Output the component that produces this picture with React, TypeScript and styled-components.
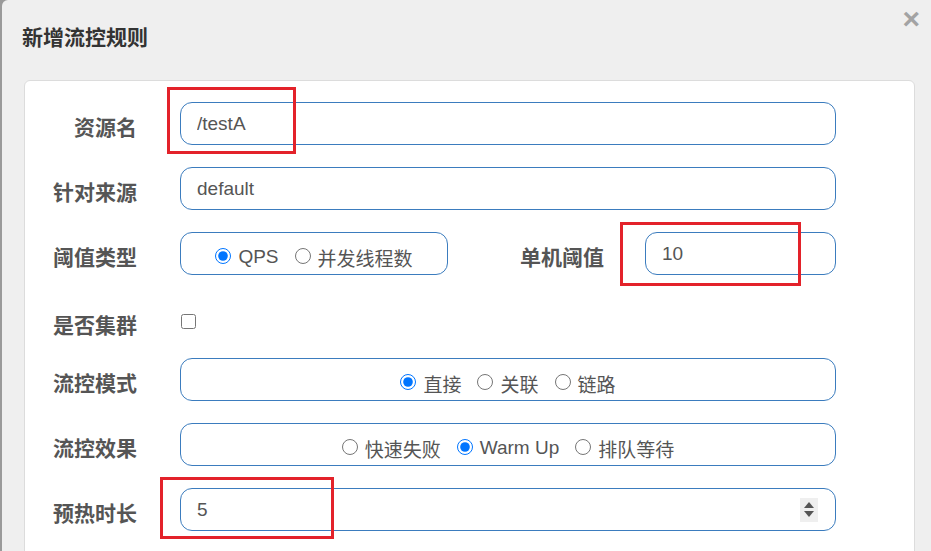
import React from "react";
import styled, { createGlobalStyle } from "styled-components";

const Global = createGlobalStyle`
  html, body { margin: 0; padding: 0; }
  body { background: #9a9a9a; font-family: "Liberation Sans", "Noto Sans CJK SC", sans-serif; }
  * { box-sizing: border-box; }
`;

const Screen = styled.div`
  position: relative;
  width: 931px;
  height: 551px;
  overflow: hidden;
  background: #9a9a9a;
  display: flex;
`;

const Modal = styled.div`
  flex: 1;
  margin-left: 2px;
  background: #efefef;
  border-top-left-radius: 6px;
  display: flex;
  flex-direction: column;
`;

const Header = styled.div`
  height: 80px;
  flex: none;
  display: flex;
  justify-content: space-between;
  align-items: flex-start;
  padding: 0 11px 0 20px;
`;

const Title = styled.h4`
  margin: 0;
  padding-top: 23px;
  font-family: "Noto Sans CJK SC", sans-serif;
  font-size: 21px;
  line-height: 27px;
  font-weight: 700;
  color: #333;
`;

const Close = styled.span`
  margin-top: 4px;
  font-family: "Liberation Sans", sans-serif;
  font-size: 30px;
  line-height: 30px;
  font-weight: 700;
  color: #a3a3a3;
`;

const Body = styled.div`
  flex: 1;
  padding: 0 16px 0 22px;
`;

const Panel = styled.div`
  background: #fff;
  border: 1px solid #dcdcdc;
  border-radius: 6px;
  padding: 21px 78px 40px 0;
  display: flex;
  flex-direction: column;
  gap: 22px;
`;

const Row = styled.div<{ $compact?: boolean }>`
  display: flex;
  align-items: center;
  height: ${(p) => (p.$compact ? "39px" : "43px")};
  padding-top: ${(p) => (p.$compact ? "10px" : "0")};
`;

const Label = styled.label<{ $grow?: boolean }>`
  flex: ${(p) => (p.$grow ? "1" : "none")};
  width: ${(p) => (p.$grow ? "auto" : "112px")};
  margin-right: ${(p) => (p.$grow ? "41px" : "43px")};
  padding-top: 6px;
  text-align: right;
  font-family: "Noto Sans CJK SC", sans-serif;
  font-size: 21px;
  line-height: 25px;
  font-weight: 700;
  color: #555;
`;

const fieldBox = `
  height: 43px;
  border: 1px solid #3b7cbe;
  border-radius: 12px;
  background: #fff;
`;

const TextInput = styled.input<{ $width?: number }>`
  ${fieldBox}
  flex: ${(p) => (p.$width ? "none" : "1")};
  width: ${(p) => (p.$width ? `${p.$width}px` : "auto")};
  min-width: 0;
  padding: 0 16px;
  font-family: "Liberation Sans", "Noto Sans CJK SC", sans-serif;
  font-size: 19px;
  color: #555;
  outline: none;
`;

const NumberBox = styled.div`
  ${fieldBox}
  flex: 1;
  display: flex;
  align-items: center;
  padding: 0 17px 0 16px;
`;

const BareInput = styled.input`
  flex: 1;
  min-width: 0;
  border: none;
  outline: none;
  padding: 0;
  background: transparent;
  font-family: "Liberation Sans", sans-serif;
  font-size: 19px;
  color: #555;
`;

const Spinner = styled.div`
  width: 18px;
  height: 24px;
  background: #efefef;
  display: flex;
  flex-direction: column;
  align-items: center;
  justify-content: center;
  gap: 3px;
`;

const Arrow = styled.span<{ $down?: boolean }>`
  width: 0;
  height: 0;
  border-left: 5px solid transparent;
  border-right: 5px solid transparent;
  ${(p) => (p.$down ? "border-top: 6px solid #555;" : "border-bottom: 6px solid #555;")}
`;

const RadioBox = styled.div<{ $width?: number }>`
  ${fieldBox}
  flex: ${(p) => (p.$width ? "none" : "1")};
  width: ${(p) => (p.$width ? `${p.$width}px` : "auto")};
  display: flex;
  justify-content: center;
  align-items: center;
  gap: 16px;
  padding-top: 4px;
`;

const Option = styled.label`
  display: flex;
  align-items: center;
  gap: 7px;
  font-family: "Liberation Sans", "Noto Sans CJK SC", sans-serif;
  font-size: 19px;
  color: #555;
`;

const OptionText = styled.span`
  padding-top: 3px;
`;

const Radio = styled.input`
  width: 16px;
  height: 16px;
  margin: 0;
  accent-color: #0075ff;
`;

const Check = styled.input`
  width: 15px;
  height: 15px;
  margin: 0 0 0 1px;
`;

const Mark = styled.div<{ $x: number; $y: number; $w: number; $h: number }>`
  position: absolute;
  left: ${(p) => p.$x}px;
  top: ${(p) => p.$y}px;
  width: ${(p) => p.$w}px;
  height: ${(p) => p.$h}px;
  border: 3px solid #e3222a;
  pointer-events: none;
`;

type Opt = { label: string; checked?: boolean };

const RadioGroup: React.FC<{ name: string; options: Opt[]; width?: number }> = ({ name, options, width }) => (
  <RadioBox $width={width}>
    {options.map((o) => (
      <Option key={o.label}>
        <Radio type="radio" name={name} defaultChecked={o.checked} />
        <OptionText>{o.label}</OptionText>
      </Option>
    ))}
  </RadioBox>
);

export default function App() {
  return (
    <>
      <Global />
      <Screen>
        <Modal>
          <Header>
            <Title>新增流控规则</Title>
            <Close>×</Close>
          </Header>
          <Body>
            <Panel>
              <Row>
                <Label>资源名</Label>
                <TextInput defaultValue="/testA" />
              </Row>
              <Row>
                <Label>针对来源</Label>
                <TextInput defaultValue="default" />
              </Row>
              <Row>
                <Label>阈值类型</Label>
                <RadioGroup
                  name="grade"
                  width={268}
                  options={[{ label: "QPS", checked: true }, { label: "并发线程数" }]}
                />
                <Label $grow>单机阈值</Label>
                <TextInput $width={191} defaultValue="10" />
              </Row>
              <Row $compact>
                <Label>是否集群</Label>
                <Check type="checkbox" />
              </Row>
              <Row>
                <Label>流控模式</Label>
                <RadioGroup
                  name="strategy"
                  options={[{ label: "直接", checked: true }, { label: "关联" }, { label: "链路" }]}
                />
              </Row>
              <Row>
                <Label>流控效果</Label>
                <RadioGroup
                  name="behavior"
                  options={[{ label: "快速失败" }, { label: "Warm Up", checked: true }, { label: "排队等待" }]}
                />
              </Row>
              <Row>
                <Label>预热时长</Label>
                <NumberBox>
                  <BareInput defaultValue="5" />
                  <Spinner>
                    <Arrow />
                    <Arrow $down />
                  </Spinner>
                </NumberBox>
              </Row>
            </Panel>
          </Body>
        </Modal>
        <Mark $x={167} $y={87} $w={129} $h={67} />
        <Mark $x={620} $y={222} $w={181} $h={64} />
        <Mark $x={160} $y={477} $w={174} $h={62} />
      </Screen>
    </>
  );
}
